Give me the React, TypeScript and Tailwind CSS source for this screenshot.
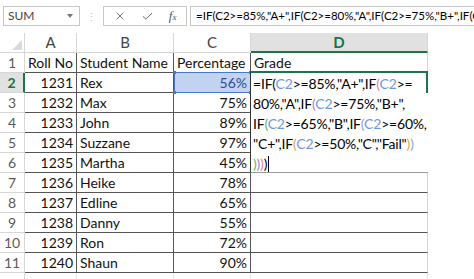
import { X, Check } from 'lucide-react';

const FONT = { fontFamily: 'Lato, "Open Sans", sans-serif' };

const rows = [
  ['1231', 'Rex', '56%'],
  ['1232', 'Max', '75%'],
  ['1233', 'John', '89%'],
  ['1234', 'Suzzane', '97%'],
  ['1235', 'Martha', '45%'],
  ['1236', 'Heike', '78%'],
  ['1237', 'Edline', '65%'],
  ['1238', 'Danny', '55%'],
  ['1239', 'Ron', '72%'],
  ['1240', 'Shaun', '90%'],
];

// paren colours by nesting level, like Excel does while editing
const P1 = 'text-black';
const P2 = 'text-[#e2828f]';
const P3 = 'text-[#a481cf]';
const P4 = 'text-[#5cb85c]';
const P5 = 'text-[#8d9fe2]';
const P6 = 'text-[#e3a24e]';

function Ref() {
  return <span className="text-[#7396d8]">C2</span>;
}

function P({ c, ch }: { c: string; ch: string }) {
  return <span className={c}>{ch}</span>;
}

const rowHead = 'flex items-center justify-center text-[14px] text-[#5a5a5a] border-b border-r border-[#d6d6d6]';
const colHead = 'flex items-center justify-center text-[15px] text-[#444] border-b border-r border-[#d6d6d6]';
const cell = 'flex items-center px-[3px] text-[14px] text-[#111] border-b border-r border-[#555] whitespace-nowrap overflow-hidden';

export default function App() {
  return (
    <div className="w-[474px] h-[279px] bg-white overflow-hidden" style={FONT}>
      {/* Formula bar */}
      <div className="flex items-stretch h-[20px] mt-[6px]">
        <div className="ml-[3px] w-[77px] border border-[#c6c6c6] flex items-center justify-between pl-[4px] pr-[6px]">
          <span className="text-[12px] text-[#444]">SUM</span>
          <svg width="6" height="4" viewBox="0 0 6 4">
            <polygon points="0,0 6,0 3,4" fill="#777" />
          </svg>
        </div>
        <div className="w-[23px] flex items-center justify-center">
          <span className="text-[11px] text-[#bbb] leading-none">⋮</span>
        </div>
        <div className="w-[84px] border border-[#c6c6c6] flex items-center justify-around px-[2px] text-[#555]">
          <X size={12} strokeWidth={1.6} />
          <Check size={13} strokeWidth={1.6} />
          <span className="text-[13px] italic text-[#555]" style={{ fontFamily: '"Liberation Serif", serif' }}>
            f<span className="text-[9px]">x</span>
          </span>
        </div>
        <div className="ml-[3px] flex-1 border-y border-l border-[#c6c6c6] flex items-center pl-[5px] overflow-hidden">
          <span className="text-[11.5px] text-black whitespace-nowrap">
            =IF(C2&gt;=85%,"A+",IF(C2&gt;=80%,"A",IF(C2&gt;=75%,"B+",IF(C2&gt;=60%,"C+",IF(C2&gt;=50%,"C","Fail"))))))
          </span>
        </div>
      </div>

      {/* Sheet grid */}
      <div className="mt-[7px] grid grid-cols-[25px_52px_97px_77px_177px_46px] auto-rows-[20px]">
        {/* header row */}
        <div className="border-b border-r border-[#d6d6d6] flex items-end justify-end pr-[2px] pb-[2px]">
          <svg width="10" height="10" viewBox="0 0 10 10">
            <polygon points="10,0 10,10 0,10" fill="#d9d9d9" />
          </svg>
        </div>
        <div className={colHead}>A</div>
        <div className={colHead}>B</div>
        <div className={colHead}>C</div>
        <div className="flex items-center justify-center text-[15px] font-bold text-[#217346] bg-[#e1e1e1] border-b-2 border-b-[#217346] border-r border-r-[#d6d6d6]">
          D
        </div>
        <div />

        {/* row 1 */}
        <div className={rowHead}>1</div>
        <div className={cell}>Roll No</div>
        <div className={cell}>Student Name</div>
        <div className={cell}>Percentage</div>
        <div className="flex items-center px-[3px] text-[14px] text-[#111] border-b border-r border-b-[#555] border-r-[#d6d6d6] border-l border-l-[#555] -ml-px">
          Grade
        </div>
        <div />

        {rows.map((r, i) => {
          const n = i + 2;
          const active = n === 2;
          return [
            <div
              key={`h${n}`}
              className={
                active
                  ? 'flex items-center justify-center text-[14px] font-bold text-[#217346] bg-[#e1e1e1] border-b border-b-[#d6d6d6] border-r-2 border-r-[#217346]'
                  : rowHead
              }
            >
              {n}
            </div>,
            <div key={`a${n}`} className={`${cell} justify-end`}>
              {r[0]}
            </div>,
            <div key={`b${n}`} className={cell}>
              {r[1]}
            </div>,
            active ? (
              <div
                key={`c${n}`}
                className="relative flex items-center justify-end px-[3px] text-[14px] text-[#2d4d8e] bg-[#c2d2f1] border border-[#4a77c8] -mt-px"
              >
                {r[2]}
                <span className="absolute -top-[2px] -left-[2px] w-[3px] h-[3px] bg-[#4a77c8]" />
                <span className="absolute -top-[2px] -right-[2px] w-[3px] h-[3px] bg-[#4a77c8]" />
                <span className="absolute -bottom-[2px] -left-[2px] w-[3px] h-[3px] bg-[#4a77c8]" />
                <span className="absolute -bottom-[2px] -right-[2px] w-[3px] h-[3px] bg-[#4a77c8]" />
              </div>
            ) : (
              <div key={`c${n}`} className={`${cell} justify-end`}>
                {r[2]}
              </div>
            ),
            active ? (
              <div
                key={`d${n}`}
                className="relative row-span-5 bg-white border-t-2 border-t-[#217346] border-l border-l-[#333] border-b border-b-[#999] -mt-[2px] -ml-px pl-[2px] pt-[1px] text-[14px] tracking-[-0.2px] leading-[20px] text-black whitespace-nowrap overflow-hidden"
              >
                <span className="absolute right-0 top-0 w-[2px] h-[20px] bg-[#217346]" />
                <div>
                  =IF<P c={P1} ch="(" />
                  <Ref />
                  &gt;=85%,"A+",IF<P c={P2} ch="(" />
                  <Ref />
                  &gt;=
                </div>
                <div>
                  80%,"A",IF<P c={P3} ch="(" />
                  <Ref />
                  &gt;=75%,"B+",
                </div>
                <div>
                  IF<P c={P4} ch="(" />
                  <Ref />
                  &gt;=65%,"B",IF<P c={P5} ch="(" />
                  <Ref />
                  &gt;=60%,
                </div>
                <div>
                  "C+",IF<P c={P6} ch="(" />
                  <Ref />
                  &gt;=50%,"C","Fail"<P c={P6} ch=")" />
                  <P c={P5} ch=")" />
                </div>
                <div className="flex items-center">
                  <P c={P4} ch=")" />
                  <P c={P3} ch=")" />
                  <P c={P2} ch=")" />
                  <P c={P1} ch=")" />
                  <span className="ml-px w-px h-[17px] bg-black" />
                </div>
              </div>
            ) : n > 6 ? (
              <div
                key={`d${n}`}
                className="border-b border-b-[#555] border-r border-r-[#d6d6d6] border-l border-l-[#555] -ml-px"
              />
            ) : null,
            <div key={`e${n}`} className={n >= 2 && n <= 6 ? 'col-start-6' : ''} />,
          ];
        })}

        {/* row 12, cut off */}
        <div className="flex items-start justify-center pt-[1px] text-[14px] text-[#5a5a5a] border-r border-[#d6d6d6]">12</div>
        <div className="border-r border-[#e4e4e4]" />
        <div className="border-r border-[#e4e4e4]" />
        <div className="border-r border-[#e4e4e4]" />
        <div className="border-r border-[#e4e4e4]" />
        <div />
      </div>
    </div>
  );
}
